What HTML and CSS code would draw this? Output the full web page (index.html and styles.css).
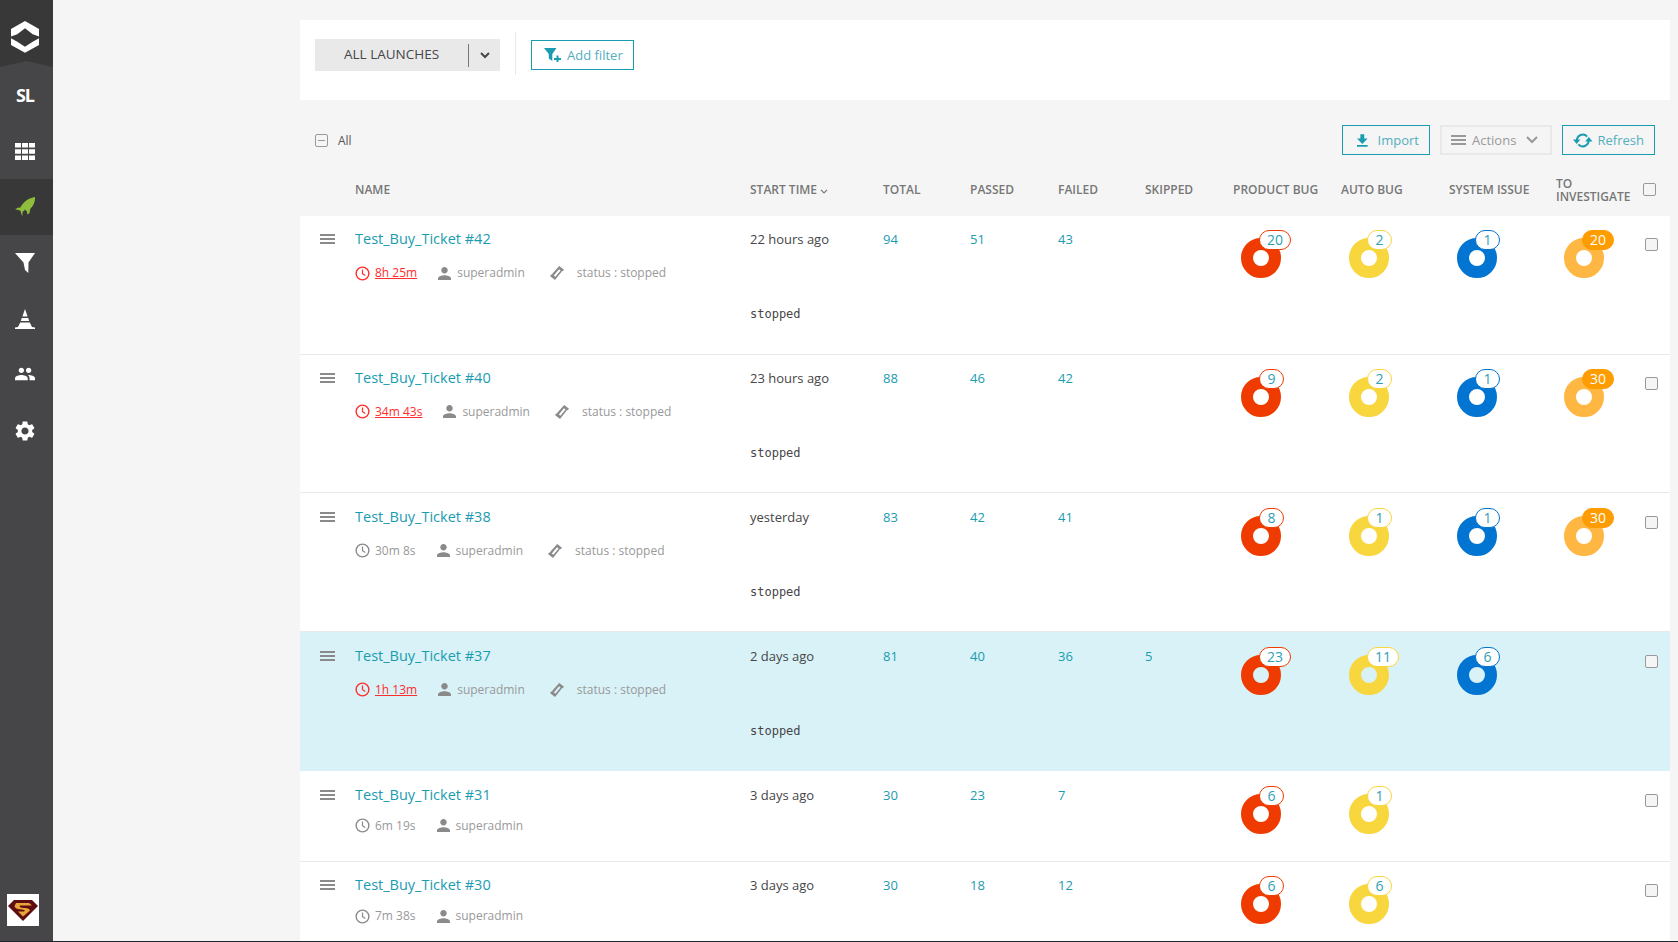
FILE: index.html
```html
<!DOCTYPE html>
<html lang="en">
<head>
    <meta charset="UTF-8">
    <meta name="viewport" content="width=device-width, initial-scale=1.0">
    <title>Launches</title>
    <link rel="stylesheet" href="styles.css">
</head>
<body>

    <!-- Shared icons -->
    <svg class="sprite" xmlns="http://www.w3.org/2000/svg">
        <symbol id="i-menu" viewBox="0 0 15 10"><path d="M0 0h15v2H0zM0 4h15v2H0zM0 8h15v2H0z"/></symbol>
        <symbol id="i-clock" viewBox="0 0 16 16"><circle cx="8" cy="8" r="6.800" fill="none" stroke="currentColor" stroke-width="1.500"/><path d="M8 3.800V8.300l3 1.900" fill="none" stroke="currentColor" stroke-width="1.300"/></symbol>
        <symbol id="i-user" viewBox="4 4 16 16"><path d="M12 12c2.210 0 4-1.790 4-4s-1.790-4-4-4-4 1.790-4 4 1.790 4 4 4zm0 2c-2.670 0-8 1.340-8 4v2h16v-2c0-2.660-5.330-4-8-4z"/></symbol>
        <symbol id="i-tag" viewBox="0 0 14 14"><path d="M9.200 0L14 3.800l-1.300 1.500-.9-.2-.4 1L5 14 0 10l1.200-1.500 1 .1.300-1zM9 3.300L3.800 9.500l1.600 1.300 5.200-6.200z" fill-rule="evenodd"/></symbol>
    </svg>

    <div class="page">
        <nav class="sidebar">
            <div class="logo">
                <svg width="28" height="32" viewBox="0 0 28 32"><path d="M14 0l14 8v7.500l-6.300-2.200L14 7.300 6.300 13.300 0 15.500V8z"/><path d="M0 17.300l6.300 3.400 7.700 5 7.700-5 6.300-3.400V24l-14 7.700L0 24z"/></svg>
            </div>
            <a class="nav-item nav-text">SL</a>
            <a class="nav-item">
                <svg width="20" height="17" viewBox="0 0 20 17"><path d="M0 0h6v4.500H0zM7 0h6v4.500H7zM14 0h6v4.500h-6zM0 6.200h6v4.500H0zM7 6.200h6v4.500H7zM14 6.200h6v4.500h-6zM0 12.500h6V17H0zM7 12.500h6V17H7zM14 12.500h6V17h-6z"/></svg>
            </a>
            <a class="nav-item active">
                <svg width="20" height="20" viewBox="0 0 20 20"><path d="M20 0c.2 4.500-1 8.500-4.800 12l-.7 4.300-2.200 1.200-.3-3-2.500-2.200-.2 1.800-1.600.2-.4 5-1-2.500-1-3.300L0 12.300l3.400-1.700 1.700.2C8.800 4 14 1 20 0z"/></svg>
            </a>
            <a class="nav-item">
                <svg width="20" height="20" viewBox="0 0 20 20"><path d="M0 0h20l-6.500 9.500-.2 10.500-3.300-3-1.500-7.500z"/></svg>
            </a>
            <a class="nav-item">
                <svg width="20" height="20" viewBox="0 0 20 20"><path d="M10 0l2.600 7.500H7.400zM6.800 9h6.400l1 3H5.800zM5.200 13.500h9.600l2.200 4.500 3 .5V20H0v-1.500l3-.5z"/></svg>
            </a>
            <a class="nav-item nav-users">
                <svg width="20" height="20" viewBox="1 5 22 14"><path d="M16 11c1.660 0 2.990-1.340 2.990-3S17.660 5 16 5c-1.660 0-3 1.340-3 3s1.340 3 3 3zm-8 0c1.660 0 2.990-1.340 2.990-3S9.660 5 8 5C6.340 5 5 6.340 5 8s1.340 3 3 3zm0 2c-2.330 0-7 1.170-7 3.500V19h14v-2.500c0-2.330-4.670-3.500-7-3.500zm8 0c-.29 0-.62.02-.97.05 1.160.84 1.970 1.970 1.970 3.450V19h6v-2.500c0-2.330-4.670-3.500-7-3.500z"/></svg>
            </a>
            <a class="nav-item">
                <svg width="24" height="24" viewBox="0 0 24 24"><path d="M19.140 12.940c.04-.3.06-.61.06-.94 0-.32-.02-.64-.07-.94l2.030-1.580a.49.49 0 0 0 .12-.61l-1.920-3.320a.488.488 0 0 0-.59-.22l-2.390.96c-.5-.38-1.030-.7-1.620-.94l-.36-2.540a.484.484 0 0 0-.48-.41h-3.840c-.24 0-.43.17-.47.41l-.36 2.540c-.59.24-1.130.57-1.620.94l-2.390-.96c-.22-.08-.47 0-.59.22L2.740 8.870c-.12.21-.08.47.12.61l2.030 1.580c-.05.3-.09.63-.09.94s.02.64.07.94l-2.030 1.580a.49.49 0 0 0-.12.61l1.920 3.320c.12.22.37.29.59.22l2.390-.96c.5.38 1.030.7 1.620.94l.36 2.540c.05.24.24.41.48.41h3.840c.24 0 .44-.17.47-.41l.36-2.540c.59-.24 1.130-.56 1.620-.94l2.390.96c.22.08.47 0 .59-.22l1.920-3.320c.12-.22.07-.47-.12-.61l-2.010-1.580zM12 15.600c-1.980 0-3.600-1.620-3.600-3.600s1.620-3.600 3.600-3.600 3.600 1.620 3.600 3.600-1.620 3.600-3.600 3.600z"/></svg>
            </a>
            <div class="avatar">
                <svg width="32" height="32" viewBox="0 2 32 32">
                    <path d="M7 8h18l6 6-15 15L1 14z" fill="#5e0d10"/>
                    <path d="M9 11h13l3 2.500H13c-1 1.200 0 2 2 2.200 5 .3 8 1 8 2.800l-7 6-5-5h6c1.500-1 .5-1.600-1-1.800-4-.3-8-1-8.500-3.500z" fill="#e9a53a"/>
                </svg>
            </div>
        </nav>

        <main class="content">
            <div class="filter-bar">
                <div class="filter-select">
                    <span class="filter-name">ALL LAUNCHES</span>
                    <span class="filter-arrow">
                        <svg width="10" height="7" viewBox="0 0 10 7"><path d="M1 1l4 4 4-4" fill="none" stroke="#464547" stroke-width="2"/></svg>
                    </span>
                </div>
                <div class="filter-sep"></div>
                <button class="btn btn-filter">
                    <svg width="17" height="14" viewBox="0 0 17 14"><path d="M0 0h12.500L8.300 6v7L4.800 10.500V6z" fill="#1a9cb0"/><path d="M10 11h7M13.500 7.500v6.500" stroke="#1a9cb0" stroke-width="2"/></svg>
                    Add filter
                </button>
            </div>

            <div class="toolbar">
                <label class="select-all"><span class="check check-mixed"></span>All</label>
                <div class="toolbar-buttons">
                    <button class="btn btn-import">
                        <svg width="11" height="13" viewBox="0 0 11 13"><path d="M3.500 0h4v4.500H11L5.500 10 0 4.500h3.500zM0 11.200h11V13H0z" fill="#1a9cb0"/></svg>
                        Import
                    </button>
                    <button class="btn btn-off">
                        <svg width="15" height="10" viewBox="0 0 15 10"><use href="#i-menu" fill="#999"/></svg>
                        Actions
                        <svg class="btn-caret" width="12" height="8" viewBox="0 0 12 8"><path d="M1 1l5 5 5-5" fill="none" stroke="#999" stroke-width="2"/></svg>
                    </button>
                    <button class="btn btn-refresh">
                        <svg width="20" height="15" viewBox="0 0 20 15"><path d="M4 7.500A6 6 0 0 1 14.500 3.500M16 7.500A6 6 0 0 1 5.500 11.500" fill="none" stroke="#1a9cb0" stroke-width="2"/><path d="M0 6.500h7.500L3.800 11zM20 8.500h-7.500l3.700-4.500z" fill="#1a9cb0"/></svg>
                        Refresh
                    </button>
                </div>
            </div>

            <div class="table-head grid-cols">
                <span class="head-cell col-name">NAME</span>
                <span class="head-cell">START TIME <svg width="8" height="5" viewBox="0 0 8 5"><path d="M1 .8l3 3 3-3" fill="none" stroke="#777" stroke-width="1.200"/></svg></span>
                <span class="head-cell">TOTAL</span>
                <span class="head-cell">PASSED</span>
                <span class="head-cell">FAILED</span>
                <span class="head-cell">SKIPPED</span>
                <span class="head-cell">PRODUCT BUG</span>
                <span class="head-cell">AUTO BUG</span>
                <span class="head-cell">SYSTEM ISSUE</span>
                <span class="head-cell head-wrap">TO INVESTIGATE</span>
                <span class="check head-check"></span>
            </div>

            <!-- Launches -->
            <div class="launch grid-cols">
                <svg class="drag"><use href="#i-menu"/></svg>
                <div class="launch-info">
                    <a class="launch-name">Test_Buy_Ticket #42</a>
                    <div class="meta">
                        <span class="meta-item late"><svg class="ic-clock"><use href="#i-clock"/></svg><u>8h 25m</u></span>
                        <span class="meta-item"><svg class="ic-user"><use href="#i-user"/></svg>superadmin</span>
                        <span class="meta-item meta-tag"><svg class="ic-tag"><use href="#i-tag"/></svg>status : stopped</span>
                    </div>
                </div>
                <span class="cell">22 hours ago</span>
                <a class="num">94</a><a class="num">51</a><a class="num">43</a><span></span>
                <div class="donut pb"><span class="badge">20</span></div>
                <div class="donut ab"><span class="badge small">2</span></div>
                <div class="donut si"><span class="badge small">1</span></div>
                <div class="donut ti"><span class="badge solid">20</span></div>
                <span class="check"></span>
                <div class="description">stopped</div>
            </div>

            <div class="launch grid-cols">
                <svg class="drag"><use href="#i-menu"/></svg>
                <div class="launch-info">
                    <a class="launch-name">Test_Buy_Ticket #40</a>
                    <div class="meta">
                        <span class="meta-item late"><svg class="ic-clock"><use href="#i-clock"/></svg><u>34m 43s</u></span>
                        <span class="meta-item"><svg class="ic-user"><use href="#i-user"/></svg>superadmin</span>
                        <span class="meta-item meta-tag"><svg class="ic-tag"><use href="#i-tag"/></svg>status : stopped</span>
                    </div>
                </div>
                <span class="cell">23 hours ago</span>
                <a class="num">88</a><a class="num">46</a><a class="num">42</a><span></span>
                <div class="donut pb"><span class="badge small">9</span></div>
                <div class="donut ab"><span class="badge small">2</span></div>
                <div class="donut si"><span class="badge small">1</span></div>
                <div class="donut ti"><span class="badge solid">30</span></div>
                <span class="check"></span>
                <div class="description">stopped</div>
            </div>

            <div class="launch grid-cols">
                <svg class="drag"><use href="#i-menu"/></svg>
                <div class="launch-info">
                    <a class="launch-name">Test_Buy_Ticket #38</a>
                    <div class="meta">
                        <span class="meta-item"><svg class="ic-clock"><use href="#i-clock"/></svg>30m 8s</span>
                        <span class="meta-item"><svg class="ic-user"><use href="#i-user"/></svg>superadmin</span>
                        <span class="meta-item meta-tag"><svg class="ic-tag"><use href="#i-tag"/></svg>status : stopped</span>
                    </div>
                </div>
                <span class="cell">yesterday</span>
                <a class="num">83</a><a class="num">42</a><a class="num">41</a><span></span>
                <div class="donut pb"><span class="badge small">8</span></div>
                <div class="donut ab"><span class="badge small">1</span></div>
                <div class="donut si"><span class="badge small">1</span></div>
                <div class="donut ti"><span class="badge solid">30</span></div>
                <span class="check"></span>
                <div class="description">stopped</div>
            </div>

            <div class="launch launch-selected grid-cols">
                <svg class="drag"><use href="#i-menu"/></svg>
                <div class="launch-info">
                    <a class="launch-name">Test_Buy_Ticket #37</a>
                    <div class="meta">
                        <span class="meta-item late"><svg class="ic-clock"><use href="#i-clock"/></svg><u>1h 13m</u></span>
                        <span class="meta-item"><svg class="ic-user"><use href="#i-user"/></svg>superadmin</span>
                        <span class="meta-item meta-tag"><svg class="ic-tag"><use href="#i-tag"/></svg>status : stopped</span>
                    </div>
                </div>
                <span class="cell">2 days ago</span>
                <a class="num">81</a><a class="num">40</a><a class="num">36</a><a class="num">5</a>
                <div class="donut pb"><span class="badge">23</span></div>
                <div class="donut ab"><span class="badge">11</span></div>
                <div class="donut si"><span class="badge small">6</span></div>
                <span></span>
                <span class="check"></span>
                <div class="description">stopped</div>
            </div>

            <div class="launch launch-short grid-cols">
                <svg class="drag"><use href="#i-menu"/></svg>
                <div class="launch-info">
                    <a class="launch-name">Test_Buy_Ticket #31</a>
                    <div class="meta">
                        <span class="meta-item"><svg class="ic-clock"><use href="#i-clock"/></svg>6m 19s</span>
                        <span class="meta-item"><svg class="ic-user"><use href="#i-user"/></svg>superadmin</span>
                    </div>
                </div>
                <span class="cell">3 days ago</span>
                <a class="num">30</a><a class="num">23</a><a class="num">7</a><span></span>
                <div class="donut pb"><span class="badge small">6</span></div>
                <div class="donut ab"><span class="badge small">1</span></div>
                <span></span><span></span>
                <span class="check"></span>
            </div>

            <div class="launch launch-short grid-cols">
                <svg class="drag"><use href="#i-menu"/></svg>
                <div class="launch-info">
                    <a class="launch-name">Test_Buy_Ticket #30</a>
                    <div class="meta">
                        <span class="meta-item"><svg class="ic-clock"><use href="#i-clock"/></svg>7m 38s</span>
                        <span class="meta-item"><svg class="ic-user"><use href="#i-user"/></svg>superadmin</span>
                    </div>
                </div>
                <span class="cell">3 days ago</span>
                <a class="num">30</a><a class="num">18</a><a class="num">12</a><span></span>
                <div class="donut pb"><span class="badge small">6</span></div>
                <div class="donut ab"><span class="badge small">6</span></div>
                <span></span><span></span>
                <span class="check"></span>
            </div>
        </main>
    </div>

</body>
</html>
```

FILE: styles.css
```css
html, body {
    margin: 0;
    height: 100%;
    overflow: hidden;
}
body {
    font-family: "Open Sans", Arial, sans-serif;
    font-size: 13px;
    color: #464547;
    background-color: #f5f5f5;
}
.sprite {
    display: none;
}
.page {
    display: flex;
    height: 941px;
    border-bottom: 1px solid #1c2730;
    overflow: hidden;
}

/* Sidebar */
.sidebar {
    width: 53px;
    flex-shrink: 0;
    display: flex;
    flex-direction: column;
    background-color: #464547;
    fill: #fff;
}
.logo {
    position: relative;
    height: 67px;
    display: flex;
    justify-content: center;
    padding: 21px 3px 0 0;
    box-sizing: border-box;
    background-color: #393839;
}
.logo::after {
    content: "";
    position: absolute;
    left: 0;
    right: 0;
    bottom: 0;
    height: 6px;
    background-color: #464547;
    clip-path: polygon(0 100%, 50% 0, 100% 100%);
}
.nav-item {
    height: 56px;
    padding-right: 3px;
    display: flex;
    align-items: center;
    justify-content: center;
}
.nav-text {
    color: #fff;
    font-size: 18px;
    font-weight: 700;
    letter-spacing: -1px;
}
.nav-item.active {
    background-color: #393839;
    fill: #8fbc3c;
}
.nav-users {
    padding-bottom: 2px;
    height: 54px;
}
.avatar {
    width: 32px;
    height: 32px;
    margin: auto 0 15px 7px;
    background-color: #fff;
}
.avatar svg {
    display: block;
}

/* Main area */
.content {
    width: 1370px;
    margin-left: 247px;
    padding-top: 20px;
}
.filter-bar {
    height: 80px;
    box-sizing: border-box;
    display: flex;
    align-items: flex-start;
    padding: 19px 0 0 15px;
    background-color: #fff;
}
.filter-select {
    width: 185px;
    height: 32px;
    display: flex;
    align-items: center;
    background-color: #e9e9e9;
}
.filter-name {
    width: 153px;
    padding: 0 0 2px 29px;
    box-sizing: border-box;
    font-size: 13.5px;
    font-weight: 500;
    white-space: nowrap;
}
.filter-arrow {
    height: 23px;
    flex: 1;
    display: flex;
    align-items: center;
    justify-content: center;
    border-left: 1px solid #777;
}
.filter-sep {
    width: 1px;
    height: 43px;
    margin: -7px 15px 0;
    background-color: #e9e9e9;
}
.btn {
    height: 30px;
    padding: 0 10px;
    display: inline-flex;
    align-items: center;
    gap: 6px;
    font-family: inherit;
    font-size: 13px;
    color: #53aec0;
    background: none;
    border: 1px solid #1a9cb0;
    white-space: nowrap;
}
.btn-off {
    color: #999;
    border-color: #e9e9e9;
    border-width: 2px;
    padding: 0 9px;
}
.btn-filter {
    width: 103px;
    margin-top: 1px;
    padding-left: 12px;
    gap: 6px;
}
.toolbar {
    height: 30px;
    margin-top: 25px;
    padding: 0 15px;
    display: flex;
    align-items: center;
    justify-content: space-between;
}
.select-all {
    display: flex;
    align-items: center;
    gap: 10px;
    font-size: 12px;
    color: #555;
}
.toolbar-buttons {
    display: flex;
    gap: 10px;
}
.btn-import {
    width: 88px;
    padding-left: 14px;
    gap: 10px;
}
.btn-off {
    width: 112px;
}
.btn-refresh {
    width: 93px;
    gap: 5px;
}
.btn-caret {
    margin-left: 4px;
}

/* Table */
.grid-cols {
    display: grid;
    grid-template-columns: 55px 395px 133px 87px 88px 87px 88px 108px 108px 107px 89px 24px;
}
.table-head {
    height: 60.7px;
    box-sizing: border-box;
    padding-top: 8px;
    align-items: center;
}
.head-cell {
    font-size: 12px;
    font-weight: 600;
    line-height: 13px;
    color: #777;
}
.col-name {
    grid-column: 2;
}
.head-wrap {
    width: 75px;
    margin-top: 2px;
}
.head-check {
    margin-left: -2px;
}
.launch {
    height: 138.9px;
    box-sizing: border-box;
    padding-top: 13.4px;
    grid-template-rows: 64px auto;
    background-color: #fff;
    border-bottom: 1px solid #e9e9e9;
}
.launch-selected {
    background-color: #d8f2f7;
    border-bottom: none;
}
.launch-short {
    height: 90.5px;
}
.drag {
    width: 15px;
    height: 10px;
    margin: 5px 0 0 20px;
    fill: #8a8a8a;
}
.launch-name {
    display: block;
    font-size: 14.5px;
    line-height: 20px;
    color: #1a9cb0;
}
.meta {
    display: flex;
    margin-top: 14px;
    font-size: 12px;
    color: #999;
    line-height: 20px;
}
.launch-short .meta {
    margin-top: 11px;
}
.meta-item {
    display: flex;
    align-items: center;
    margin-right: 21px;
    fill: #8a8a8a;
}
.meta-tag {
    margin-left: 4px;
}
.late {
    color: #ff2d2d;
}
.ic-clock {
    width: 15px;
    height: 15px;
    margin-right: 5px;
}
.meta-item:not(.late) .ic-clock {
    color: #8a8a8a;
}
.ic-user {
    width: 13px;
    height: 13px;
    margin-right: 6px;
}
.ic-tag {
    width: 14px;
    height: 14px;
    margin-right: 13px;
}
.cell {
    font-size: 13px;
    line-height: 20px;
}
.num {
    font-size: 13px;
    line-height: 20px;
    color: #1a9cb0;
}
.donut {
    position: relative;
    width: 40px;
    height: 40px;
    box-sizing: border-box;
    margin: 9px 0 0 8px;
    border: 12px solid;
    border-radius: 50%;
}
.pb { border-color: #ef3b00; }
.ab { border-color: #f8d63e; }
.si { border-color: #0274d1; }
.ti { border-color: #ffb743; }
.badge {
    position: absolute;
    left: 6px;
    top: -20px;
    width: 32px;
    height: 20px;
    box-sizing: border-box;
    border: 1px solid;
    border-radius: 10px;
    background-color: #fff;
    font-size: 14px;
    line-height: 18px;
    text-align: center;
    color: #2f9fb5;
}
.pb .badge { border-color: #ef3b00; }
.ab .badge { border-color: #f8d63e; }
.si .badge { border-color: #0274d1; }
.badge.small {
    width: 25px;
}
.ti .badge.solid {
    color: #fff;
    background-color: #ff9c00;
    border-color: #ff9c00;
}
.check {
    display: block;
    width: 11px;
    height: 11px;
    margin-top: 9px;
    box-sizing: content-box;
    border: 1px solid #999;
    border-radius: 2px;
    background-color: #f5f5f5;
}
.head-check,
.select-all .check {
    margin-top: 0;
}
.check-mixed {
    position: relative;
}
.check-mixed::after {
    content: "";
    position: absolute;
    left: 2px;
    right: 2px;
    top: 5px;
    height: 1px;
    background-color: #999;
}
.launch-info {
    grid-row: 1 / span 2;
    grid-column: 2;
}
.description {
    grid-column: 3 / -1;
    grid-row: 2;
    margin-top: 12px;
    font-family: "DejaVu Sans Mono", monospace;
    font-size: 12px;
    line-height: 18px;
}
```
